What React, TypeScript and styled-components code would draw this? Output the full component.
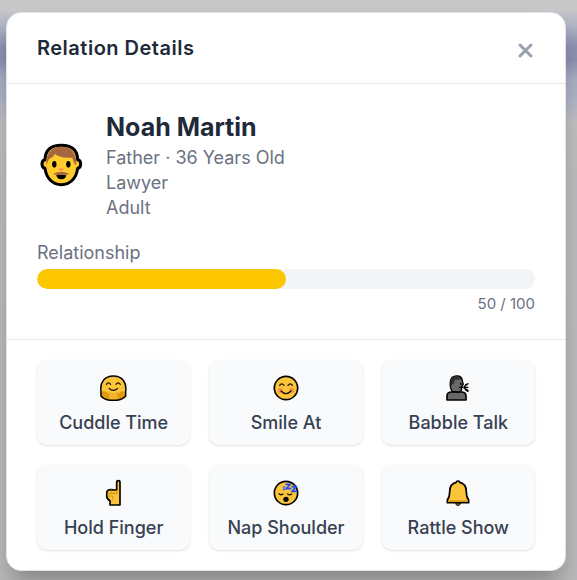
import React from 'react';
import styled, { createGlobalStyle } from 'styled-components';

const GlobalStyle = createGlobalStyle`
  *, *::before, *::after { box-sizing: border-box; }
  body {
    margin: 0;
    font-family: Inter, 'Liberation Sans', sans-serif;
    color: #1e2939;
    background: linear-gradient(180deg, #c8c8c8 0, #c7c7c9 10px, #b0b3c4 26px, #9092b3 46px, #8e90b2 60px, #a9adc2 78px, #afb3c6 98px, #bfbfc0 122px, #bcbcbe 180px, #b9b9bb 100%) no-repeat #b9b9bb;
  }
  button { font: inherit; color: inherit; cursor: pointer; }
`;

const Backdrop = styled.div`
  min-height: 100vh;
  padding: 12px 11px 9px 6px;
`;

const Dialog = styled.section`
  background: #fff;
  border: 1px solid #e1e3e8;
  border-radius: 15px;
  box-shadow: 0 16px 24px -6px rgba(0, 0, 0, 0.3);
`;

const Header = styled.header`
  display: flex;
  align-items: center;
  justify-content: space-between;
  padding: 20px 30px;
  border-bottom: 1px solid #e5e7eb;
`;

const Title = styled.h2`
  margin: 0;
  font-size: 20px;
  line-height: 30px;
  font-weight: 600;
  letter-spacing: 0.025em;
`;

const CloseButton = styled.button`
  display: flex;
  padding: 6px 2px 2px;
  border: 0;
  background: none;
  color: #99a1af;
`;

const Details = styled.div`
  padding: 25px 30px;
  border-bottom: 1px solid #e5e7eb;
`;

const Profile = styled.div`
  display: flex;
  align-items: center;
  gap: 20px;
`;

const Name = styled.h3`
  margin: 0;
  font-size: 25px;
  line-height: 36px;
  font-weight: 700;
`;

const Fact = styled.p`
  margin: 0;
  font-size: 18px;
  line-height: 25px;
  color: #6a7282;
`;

const Meter = styled.div`
  display: flex;
  flex-direction: column;
  padding-top: 20px;
`;

const MeterLabel = styled.span`
  font-size: 18px;
  line-height: 25px;
  padding-bottom: 4px;
  color: #6a7282;
`;

const Track = styled.div`
  height: 20px;
  border-radius: 10px;
  background: #f3f4f6;
  overflow: hidden;
`;

const Fill = styled.div`
  height: 100%;
  border-radius: 10px;
  background: #fdc700;
`;

const MeterValue = styled.span`
  padding-top: 5px;
  font-size: 15px;
  line-height: 20px;
  text-align: right;
  color: #6a7282;
`;

const Actions = styled.div`
  display: grid;
  grid-template-columns: repeat(3, 1fr);
  gap: 20px 19px;
  padding: 20px 30px;
`;

const ActionButton = styled.button`
  display: flex;
  flex-direction: column;
  align-items: center;
  gap: 8px;
  padding: 14px 4px 10px;
  border: 0;
  border-radius: 10px;
  background: #f9fafb;
  box-shadow: 0 1px 3px rgba(0, 0, 0, 0.1), 0 1px 2px -1px rgba(0, 0, 0, 0.1);
  color: #364153;
  font-size: 18px;
  line-height: 25px;
  font-weight: 500;
`;

const ActionIcon = styled.svg.attrs({ viewBox: '30 27 84 84', 'aria-hidden': true })`
  width: 28px;
  height: 28px;
  stroke-linecap: round;
  stroke-linejoin: round;
`;

const Portrait = styled.svg`
  flex: none;
  width: 49px;
  height: 50px;
`;

const ManIcon = () => (
  <Portrait viewBox="21 15 147 150" aria-hidden="true" strokeLinecap="round" strokeLinejoin="round">
    <path d="M45 74C46 45 64 31 94 31s48 14 49 43c7 1 9 6 9 13s-3 12-9 13c-4 30-23 49-49 49s-45-19-49-49c-6-1-9-6-9-13s2-12 9-13Z" fill="#ffcc2b" stroke="#000" strokeWidth="9" />
    <path d="M49 91c-2-33 12-56 45-56s47 23 45 56c-7-5-9-14-12-23-26 1-43-3-53-12-2 8-8 11-13 14-7 4-8 13-12 21Z" fill="#a5673f" />
    <ellipse cx="73" cy="88" rx="6.5" ry="10" fill="#000" />
    <ellipse cx="115" cy="88" rx="6.5" ry="10" fill="#000" />
    <path d="M88 102q6-3 12 0l-6 6Z" fill="#ff8b5c" stroke="#ff8b5c" strokeWidth="3" />
    <path d="M79 119h30c-1 9-6 14-15 14s-14-5-15-14Z" fill="#000" />
    <path d="M69 118c8-6 16-7 25-7s17 1 25 7c-18 3-34 3-50 0Z" fill="#a5673f" />
  </Portrait>
);

const HugIcon = () => (
  <ActionIcon>
    <circle cx="70" cy="69" r="36" fill="#fcc43a" />
    <path d="M33 80q13-4 22 5l7-4 2 24q-21 0-32-9ZM107 80q-13-4-22 5l-7-4-2 24q21 0 32-9Z" fill="#e09b12" />
    <path d="M58 84h24v20H58Z" fill="#f3b52f" />
    <path d="M33 79C29 52 44 33 70 33s41 19 37 46v14c-7 8-18 12-26 13H59c-8-1-19-5-26-13Z" fill="none" stroke="#000" strokeWidth="4.5" />
    <path d="M49 58q6-9 13 0M78 58q6-9 13 0M57 70q13 12 26 0" fill="none" stroke="#171000" strokeWidth="3.6" />
  </ActionIcon>
);

const SmileIcon = () => (
  <ActionIcon>
    <circle cx="72" cy="69" r="35" fill="#fcc43a" stroke="#000" strokeWidth="5" />
    <circle cx="55" cy="76" r="8" fill="#f99146" />
    <circle cx="89" cy="76" r="8" fill="#f99146" />
    <path d="M53 61q6-9 13 0M78 61q6-9 13 0M57 78q15 16 30 0" fill="none" stroke="#171000" strokeWidth="4" />
  </ActionIcon>
);

const TalkIcon = () => (
  <ActionIcon>
    <path d="M39 105V93q0-12 14-12h29q14 0 14 12v12Z" fill="#686868" stroke="#000" strokeWidth="5" />
    <path d="M55 79c-8-9-7-20-6-29 2-13 12-18 22-17 9 1 14 6 14 15l3 10-4 4-2 15q-8 6-17 3Z" fill="#686868" stroke="#000" strokeWidth="4" />
    <path d="M50 65c-2-20 2-29 15-31 10-2 17 3 18 9-10 2-16 0-21 2l-3 11-5 3Z" fill="#303030" />
    <path d="M80 55v3M76 67h10M90 65l12-9M90 67h12M90 69l12 7M95 59l5-2M94 74l8 5" fill="none" stroke="#000" strokeWidth="4" />
  </ActionIcon>
);

const FingerIcon = () => (
  <ActionIcon>
    <path d="M80 60V38q0-6 5-6t5 6v67H60V92q-10-5-10-15l1-13q4-5 10-5Z" fill="#fcc43a" stroke="#000" strokeWidth="5" />
    <path d="M63 60v11M72 60v11M81 60v11M54 71h28M55 78h13q0 8 1 10" fill="none" stroke="#c98b15" strokeWidth="2.5" />
  </ActionIcon>
);

const SleepIcon = () => (
  <ActionIcon>
    <circle cx="72" cy="69" r="35" fill="#fcc43a" stroke="#000" strokeWidth="5" />
    <path d="M51 71q5 6 12 1M77 72q6 5 12 0" fill="none" stroke="#171000" strokeWidth="4" />
    <circle cx="72" cy="88" r="8" fill="#000" />
    <path d="M63 51h6l-6 8h6" fill="none" stroke="#1e50ff" strokeWidth="3" />
    <path d="M73 43h11l-11 13h12M91 50h11L91 64h12" fill="none" stroke="#1e50ff" strokeWidth="5.5" strokeLinecap="square" strokeLinejoin="miter" />
  </ActionIcon>
);

const BellIcon = () => (
  <ActionIcon>
    <circle cx="72" cy="100" r="7" fill="#914c1d" stroke="#000" strokeWidth="2" />
    <path d="M67 37q0-4 5-4t5 4c15 3 20 13 20 28 0 12 2 19 7 25v8H40v-8c5-6 7-13 7-25 0-15 5-25 20-28Z" fill="#fcc43a" stroke="#000" strokeWidth="5" />
    <path d="M44 93h56" stroke="#e09b12" strokeWidth="4" />
  </ActionIcon>
);

const CloseIcon = () => (
  <svg width="16" height="16" viewBox="0 0 16 16" fill="none" stroke="currentColor" strokeWidth="3" strokeLinecap="round" aria-hidden="true">
    <path d="M3 3l11 11M14 3L3 14" />
  </svg>
);

const actions = [
  { label: 'Cuddle Time', Icon: HugIcon },
  { label: 'Smile At', Icon: SmileIcon },
  { label: 'Babble Talk', Icon: TalkIcon },
  { label: 'Hold Finger', Icon: FingerIcon },
  { label: 'Nap Shoulder', Icon: SleepIcon },
  { label: 'Rattle Show', Icon: BellIcon },
];

const relationship = { value: 50, max: 100 };

export default function App() {
  return (
    <>
      <GlobalStyle />
      <Backdrop>
        <Dialog role="dialog" aria-labelledby="dialog-title">
          <Header>
            <Title id="dialog-title">Relation Details</Title>
            <CloseButton type="button" aria-label="Close">
              <CloseIcon />
            </CloseButton>
          </Header>
          <Details>
            <Profile>
              <ManIcon />
              <div>
                <Name>Noah Martin</Name>
                <Fact>Father · 36 Years Old</Fact>
                <Fact>Lawyer</Fact>
                <Fact>Adult</Fact>
              </div>
            </Profile>
            <Meter>
              <MeterLabel id="relationship-label">Relationship</MeterLabel>
              <Track
                role="progressbar"
                aria-labelledby="relationship-label"
                aria-valuenow={relationship.value}
                aria-valuemax={relationship.max}
              >
                <Fill style={{ width: `${(relationship.value / relationship.max) * 100}%` }} />
              </Track>
              <MeterValue>
                {relationship.value} / {relationship.max}
              </MeterValue>
            </Meter>
          </Details>
          <Actions>
            {actions.map(({ label, Icon }) => (
              <ActionButton key={label} type="button">
                <Icon />
                {label}
              </ActionButton>
            ))}
          </Actions>
        </Dialog>
      </Backdrop>
    </>
  );
}
